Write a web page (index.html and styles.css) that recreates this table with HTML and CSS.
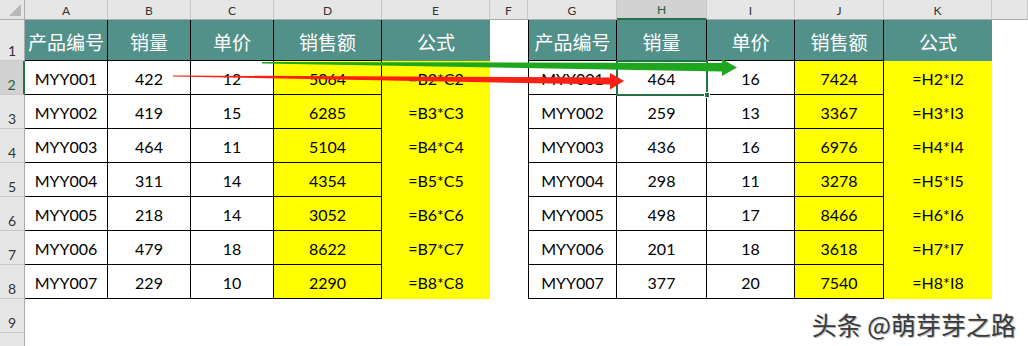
FILE: index.html
```html
<!DOCTYPE html>
<html lang="zh">
<head>
<meta charset="utf-8">
<title>Sheet</title>
<link rel="stylesheet" href="styles.css">
</head>
<body>
<div class="sheet">
  <!-- column header row -->
  <div class="corner"><span class="tri"></span></div>
  <div class="ch">A</div><div class="ch">B</div><div class="ch">C</div><div class="ch">D</div><div class="ch">E</div><div class="ch">F</div><div class="ch">G</div><div class="ch sel-col">H</div><div class="ch">I</div><div class="ch">J</div><div class="ch">K</div><div class="ch"></div>

  <!-- row 1 -->
  <div class="rh">1</div>
  <div class="hd b">产品编号</div><div class="hd b">销量</div><div class="hd b">单价</div><div class="hd b">销售额</div><div class="hd">公式</div>
  <div class="c"></div>
  <div class="hd b bl">产品编号</div><div class="hd b">销量</div><div class="hd b">单价</div><div class="hd b">销售额</div><div class="hd">公式</div>
  <div class="c"></div>

  <!-- row 2 -->
  <div class="rh sel-row">2</div>
  <div class="d b">MYY001</div><div class="d b">422</div><div class="d b">12</div><div class="d b y">5064</div><div class="d y">=B2*C2</div>
  <div class="c"></div>
  <div class="d b bl">MYY001</div><div class="d b active">464<span class="selbox"><span class="handle"></span></span></div><div class="d b">16</div><div class="d b y">7424</div><div class="d y">=H2*I2</div>
  <div class="c"></div>

  <!-- row 3 -->
  <div class="rh">3</div>
  <div class="d b">MYY002</div><div class="d b">419</div><div class="d b">15</div><div class="d b y">6285</div><div class="d y">=B3*C3</div>
  <div class="c"></div>
  <div class="d b bl">MYY002</div><div class="d b">259</div><div class="d b">13</div><div class="d b y">3367</div><div class="d y">=H3*I3</div>
  <div class="c"></div>

  <!-- row 4 -->
  <div class="rh">4</div>
  <div class="d b">MYY003</div><div class="d b">464</div><div class="d b">11</div><div class="d b y">5104</div><div class="d y">=B4*C4</div>
  <div class="c"></div>
  <div class="d b bl">MYY003</div><div class="d b">436</div><div class="d b">16</div><div class="d b y">6976</div><div class="d y">=H4*I4</div>
  <div class="c"></div>

  <!-- row 5 -->
  <div class="rh">5</div>
  <div class="d b">MYY004</div><div class="d b">311</div><div class="d b">14</div><div class="d b y">4354</div><div class="d y">=B5*C5</div>
  <div class="c"></div>
  <div class="d b bl">MYY004</div><div class="d b">298</div><div class="d b">11</div><div class="d b y">3278</div><div class="d y">=H5*I5</div>
  <div class="c"></div>

  <!-- row 6 -->
  <div class="rh">6</div>
  <div class="d b">MYY005</div><div class="d b">218</div><div class="d b">14</div><div class="d b y">3052</div><div class="d y">=B6*C6</div>
  <div class="c"></div>
  <div class="d b bl">MYY005</div><div class="d b">498</div><div class="d b">17</div><div class="d b y">8466</div><div class="d y">=H6*I6</div>
  <div class="c"></div>

  <!-- row 7 -->
  <div class="rh">7</div>
  <div class="d b">MYY006</div><div class="d b">479</div><div class="d b">18</div><div class="d b y">8622</div><div class="d y">=B7*C7</div>
  <div class="c"></div>
  <div class="d b bl">MYY006</div><div class="d b">201</div><div class="d b">18</div><div class="d b y">3618</div><div class="d y">=H7*I7</div>
  <div class="c"></div>

  <!-- row 8 -->
  <div class="rh">8</div>
  <div class="d b">MYY007</div><div class="d b">229</div><div class="d b">10</div><div class="d b y">2290</div><div class="d y">=B8*C8</div>
  <div class="c"></div>
  <div class="d b bl">MYY007</div><div class="d b">377</div><div class="d b">20</div><div class="d b y">7540</div><div class="d y">=H8*I8</div>
  <div class="c"></div>

  <!-- row 9 -->
  <div class="rh">9</div>
  <div class="c"></div><div class="c"></div><div class="c"></div><div class="c"></div><div class="c"></div><div class="c"></div><div class="c"></div><div class="c"></div><div class="c"></div><div class="c"></div><div class="c"></div><div class="c"></div>

  <!-- row 10 (only its top edge is visible) -->
  <div class="rh"></div>
  <div class="c"></div><div class="c"></div><div class="c"></div><div class="c"></div><div class="c"></div><div class="c"></div><div class="c"></div><div class="c"></div><div class="c"></div><div class="c"></div><div class="c"></div><div class="c"></div>

  <svg class="arrows" width="1028" height="346" viewBox="0 0 1028 346" aria-hidden="true">
    <polygon fill="#1fa61f" points="262,62 722,63 722,59 737,67.5 722,76 722,71.5 262,63.5"/>
    <polygon fill="#fb1f14" points="173,75.5 610,77.5 610,73 624,81 610,89.5 610,84.5 173,76.5"/>
  </svg>

  <div class="watermark">头条 @萌芽芽之路</div>
</div>
</body>
</html>
```

FILE: styles.css
```css
* { box-sizing: border-box; }

html, body {
  margin: 0;
  padding: 0;
  background: #ffffff;
  overflow: hidden;
}

.sheet {
  position: relative;
  width: 1028px;
  height: 346px;
  overflow: hidden;
  display: grid;
  grid-template-columns: 25px 83px 83px 83px 108px 108px 38px 89px 90px 88px 89px 108px 36px;
  grid-template-rows: 20px 41px repeat(7, 34px) 34px 34px;
  font-family: Lato, "Liberation Sans", sans-serif;
}

.corner {
  position: relative;
  background: #e6e6e6;
  border-right: 1px solid #ababab;
  border-bottom: 1px solid #ababab;
}
.corner .tri {
  position: absolute;
  right: 3px;
  bottom: 3px;
  width: 0;
  height: 0;
  border-left: 12px solid transparent;
  border-bottom: 12px solid #b8b8b8;
}

.ch {
  background: #e6e6e6;
  border-right: 1px solid #c8c8c8;
  border-bottom: 1px solid #ababab;
  color: #333;
  font-size: 12px;
  display: flex;
  align-items: center;
  justify-content: center;
  padding-top: 1px;
}
.ch.sel-col {
  background: #d2d2d2;
  color: #1f5f3a;
  border-bottom: 2px solid #217346;
}

.rh {
  background: #e6e6e6;
  border-right: 1px solid #ababab;
  border-bottom: 1px solid #c8c8c8;
  color: #333;
  font-size: 14px;
  display: flex;
  align-items: flex-end;
  justify-content: center;
  padding-bottom: 1px;
}
.rh.sel-row {
  background: #d2d2d2;
  color: #1f5f3a;
  border-right: 2px solid #217346;
}

.c { background: #ffffff; }

.hd {
  background: #52918a;
  color: #ffffff;
  font-family: "Noto Sans CJK SC", "Noto Sans", sans-serif;
  font-size: 19px;
  display: flex;
  align-items: center;
  justify-content: center;
  padding-top: 2px;
}

.d {
  background: #ffffff;
  color: #000;
  font-size: 16px;
  display: flex;
  align-items: center;
  justify-content: center;
  padding-top: 1px;
}

.b {
  border-right: 1px solid #000;
  border-bottom: 1px solid #000;
}
.bl { border-left: 1px solid #000; }

.y { background: #ffff00; }

.active { position: relative; }
.selbox {
  position: absolute;
  left: -1px;
  top: -1px;
  right: -2px;
  bottom: -2px;
  border: 2px solid #217346;
}
.handle {
  position: absolute;
  right: -4px;
  bottom: -4px;
  width: 6px;
  height: 6px;
  background: #217346;
  border: 1px solid #ffffff;
}

.arrows {
  position: absolute;
  left: 0;
  top: 0;
  pointer-events: none;
}

.watermark {
  position: absolute;
  right: 12px;
  bottom: 8px;
  font-family: "Noto Sans CJK SC", sans-serif;
  font-size: 25px;
  line-height: 28px;
  color: #3a3a3a;
  text-shadow: 1px 1px 0 #bdbdbd, -1px -1px 0 #f2f2f2;
  white-space: nowrap;
}
```
